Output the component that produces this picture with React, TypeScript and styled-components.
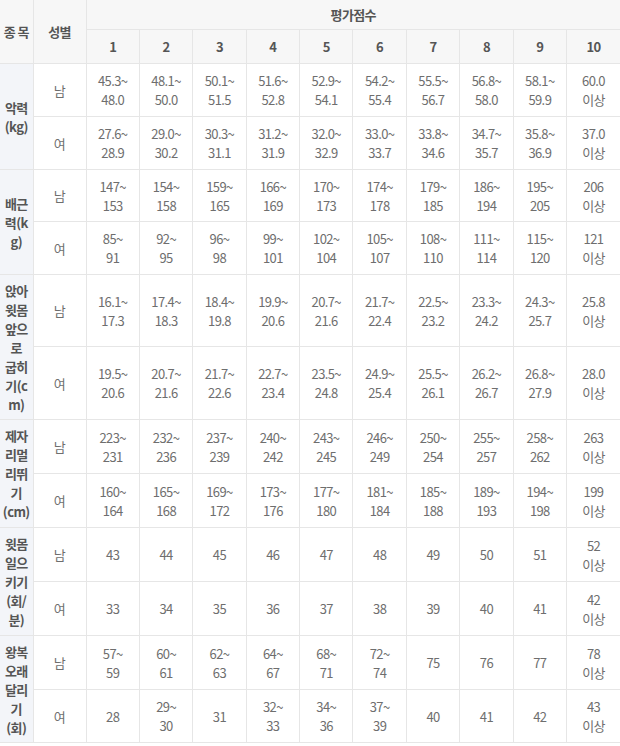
import React from 'react';
import styled, { createGlobalStyle } from 'styled-components';

const GlobalStyle = createGlobalStyle`
  html, body {
    margin: 0;
    padding: 0;
    background: #ffffff;
  }
  body {
    font-family: 'Noto Sans CJK KR', 'Noto Sans', sans-serif;
  }
`;

interface Item {
  label: string[];
  heights: [number, number];
  male: string[];
  female: string[];
}

// row heights are the visible row pitch minus the 1px collapsed border
const ITEMS: Item[] = [
  {
    label: ['악력', '(kg)'],
    heights: [52, 52],
    male: ['45.3~48.0', '48.1~50.0', '50.1~51.5', '51.6~52.8', '52.9~54.1', '54.2~55.4', '55.5~56.7', '56.8~58.0', '58.1~59.9', '60.0 이상'],
    female: ['27.6~28.9', '29.0~30.2', '30.3~31.1', '31.2~31.9', '32.0~32.9', '33.0~33.7', '33.8~34.6', '34.7~35.7', '35.8~36.9', '37.0 이상'],
  },
  {
    label: ['배근', '력(k', 'g)'],
    heights: [51, 52],
    male: ['147~153', '154~158', '159~165', '166~169', '170~173', '174~178', '179~185', '186~194', '195~205', '206 이상'],
    female: ['85~91', '92~95', '96~98', '99~101', '102~104', '105~107', '108~110', '111~114', '115~120', '121 이상'],
  },
  {
    label: ['앉아', '윗몸', '앞으', '로', '굽히', '기(c', 'm)'],
    heights: [71, 72],
    male: ['16.1~17.3', '17.4~18.3', '18.4~19.8', '19.9~20.6', '20.7~21.6', '21.7~22.4', '22.5~23.2', '23.3~24.2', '24.3~25.7', '25.8 이상'],
    female: ['19.5~20.6', '20.7~21.6', '21.7~22.6', '22.7~23.4', '23.5~24.8', '24.9~25.4', '25.5~26.1', '26.2~26.7', '26.8~27.9', '28.0 이상'],
  },
  {
    label: ['제자', '리멀', '리뛰', '기', '(cm)'],
    heights: [53, 53],
    male: ['223~231', '232~236', '237~239', '240~242', '243~245', '246~249', '250~254', '255~257', '258~262', '263 이상'],
    female: ['160~164', '165~168', '169~172', '173~176', '177~180', '181~184', '185~188', '189~193', '194~198', '199 이상'],
  },
  {
    label: ['윗몸', '일으', '키기', '(회/', '분)'],
    heights: [53, 53],
    male: ['43', '44', '45', '46', '47', '48', '49', '50', '51', '52 이상'],
    female: ['33', '34', '35', '36', '37', '38', '39', '40', '41', '42 이상'],
  },
  {
    label: ['왕복', '오래', '달리', '기', '(회)'],
    heights: [53, 52],
    male: ['57~59', '60~61', '62~63', '64~67', '68~71', '72~74', '75', '76', '77', '78 이상'],
    female: ['28', '29~30', '31', '32~33', '34~36', '37~39', '40', '41', '42', '43 이상'],
  },
];

const SCORES = [1, 2, 3, 4, 5, 6, 7, 8, 9, 10];

// "45.3~48.0" -> ["45.3~", "48.0"], "60.0 이상" -> ["60.0", "이상"]
function splitValue(v: string): string[] {
  if (v.includes('~')) {
    const [a, b] = v.split('~');
    return [a + '~', b];
  }
  if (v.includes(' ')) return v.split(' ');
  return [v];
}

const Table = styled.table`
  width: 620px;
  border-collapse: collapse;
  table-layout: fixed;
  color: #6e6e6e;
  font-size: 13px;
  line-height: 19px;
  letter-spacing: -0.6px;
`;

const HeadCell = styled.th<{ $h?: number }>`
  height: ${({ $h = 29 }) => $h}px;
  padding: 0;
  background: #f7f7f7;
  border: 1px solid #e6e6e6;
  border-top: none;
  color: #555;
  font-weight: 700;
  text-align: center;
  vertical-align: middle;
  white-space: pre;
  &:first-child {
    border-left: none;
  }
`;

const LastHeadCell = styled(HeadCell)`
  border-right: none;
`;

const ItemCell = styled.th`
  padding: 0;
  background: #f3f5f9;
  border: 1px solid #e6e6e6;
  border-left: none;
  color: #555;
  font-weight: 700;
  text-align: center;
  vertical-align: middle;
  line-height: 19px;
`;

const Cell = styled.td<{ $h: number }>`
  height: ${({ $h }) => $h}px;
  padding: 0;
  border: 1px solid #e6e6e6;
  text-align: center;
  vertical-align: middle;
  &:last-child {
    border-right: none;
  }
`;

const Line = styled.span`
  display: block;
`;

function Lines({ lines }: { lines: string[] }) {
  return (
    <>
      {lines.map((l, i) => (
        <Line key={i}>{l}</Line>
      ))}
    </>
  );
}

function ItemRows({ item }: { item: Item }) {
  return (
    <>
      <tr>
        <ItemCell rowSpan={2}>
          <Lines lines={item.label} />
        </ItemCell>
        <Cell $h={item.heights[0]}>남</Cell>
        {item.male.map((v, i) => (
          <Cell key={i} $h={item.heights[0]}>
            <Lines lines={splitValue(v)} />
          </Cell>
        ))}
      </tr>
      <tr>
        <Cell $h={item.heights[1]}>여</Cell>
        {item.female.map((v, i) => (
          <Cell key={i} $h={item.heights[1]}>
            <Lines lines={splitValue(v)} />
          </Cell>
        ))}
      </tr>
    </>
  );
}

export default function App() {
  return (
    <>
      <GlobalStyle />
      <Table>
        <colgroup>
          <col style={{ width: 33 }} />
          <col style={{ width: 53 }} />
          {SCORES.map((s) => (
            <col key={s} />
          ))}
        </colgroup>
        <thead>
          <tr>
            <HeadCell rowSpan={2}>종 목</HeadCell>
            <HeadCell rowSpan={2}>성별</HeadCell>
            <LastHeadCell colSpan={10} $h={29}>
              평가점수
            </LastHeadCell>
          </tr>
          <tr>
            {SCORES.map((s) =>
              s === 10 ? (
                <LastHeadCell key={s} $h={33}>
                  {s}
                </LastHeadCell>
              ) : (
                <HeadCell key={s} $h={33}>
                  {s}
                </HeadCell>
              ),
            )}
          </tr>
        </thead>
        <tbody>
          {ITEMS.map((item) => (
            <ItemRows key={item.label.join('')} item={item} />
          ))}
        </tbody>
      </Table>
    </>
  );
}
